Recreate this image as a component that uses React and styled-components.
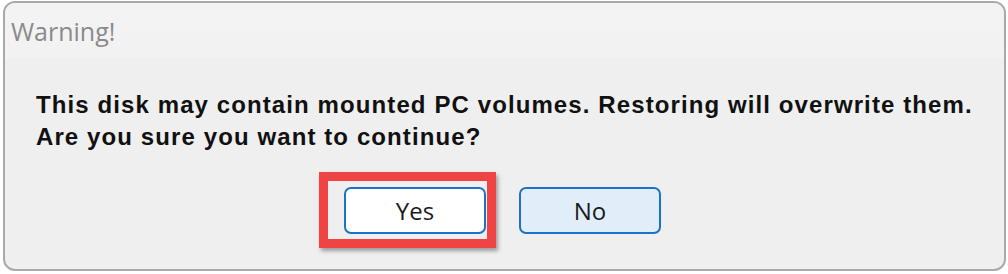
import styled, { createGlobalStyle } from "styled-components";

const GlobalStyle = createGlobalStyle`
	html, body {
		margin: 0;
		padding: 0;
		background: #ffffff;
	}
	#root {
		width: 1008px;
		height: 274px;
		padding: 1px 2px 0 3px;
		box-sizing: border-box;
	}
`;

const Window = styled.div`
	width: 1003px;
	height: 270px;
	box-sizing: border-box;
	border: 2px solid #a9a9a9;
	border-radius: 12px;
	background: #efefef;
	display: flex;
	flex-direction: column;
	overflow: hidden;
`;

const TitleBar = styled.div`
	height: 55px;
	padding-left: 6px;
	display: flex;
	align-items: center;
	background: linear-gradient(#f3f3f3, #f2f2f2);
	font-family: "Open Sans", "Noto Sans", sans-serif;
	font-size: 25px;
	color: #8a8a8a;
`;

const Body = styled.div`
	flex: 1;
	display: flex;
	flex-direction: column;
	padding-top: 31px;
`;

const Message = styled.p`
	margin: 0;
	padding-left: 31px;
	font-family: "Liberation Sans", Arial, sans-serif;
	font-weight: bold;
	font-size: 24px;
	letter-spacing: 1.1px;
	line-height: 32px;
	color: #111111;
`;

const ButtonRow = styled.div`
	display: flex;
	justify-content: center;
	gap: 33px;
	margin-top: 34px;
	padding-right: 4px;
`;

const Highlight = styled.span`
	position: relative;
	display: inline-flex;

	&::after {
		content: "";
		position: absolute;
		left: -25px;
		right: -10px;
		top: -15px;
		bottom: -14px;
		border: 9px solid #f04343;
		box-shadow: 2px 3px 4px rgba(0, 0, 0, 0.35);
		pointer-events: none;
	}
`;

const Button = styled.button`
	width: 142px;
	height: 47px;
	box-sizing: border-box;
	border: 2px solid #1a73c8;
	border-radius: 7px;
	background: ${(p) => (p.$default ? "#e1eefa" : "#ffffff")};
	font-family: "Open Sans", "Noto Sans", sans-serif;
	font-size: 24px;
	color: #1a1a1a;
	padding: 0;
	cursor: pointer;
`;

const App = () => {
	return (
		<>
			<GlobalStyle />
			<Window>
				<TitleBar>Warning!</TitleBar>
				<Body>
					<Message>
						This disk may contain mounted PC volumes. Restoring will overwrite them.
						<br />
						Are you sure you want to continue?
					</Message>
					<ButtonRow>
						<Highlight>
							<Button>Yes</Button>
						</Highlight>
						<Button $default>No</Button>
					</ButtonRow>
				</Body>
			</Window>
		</>
	);
};

export default App;
